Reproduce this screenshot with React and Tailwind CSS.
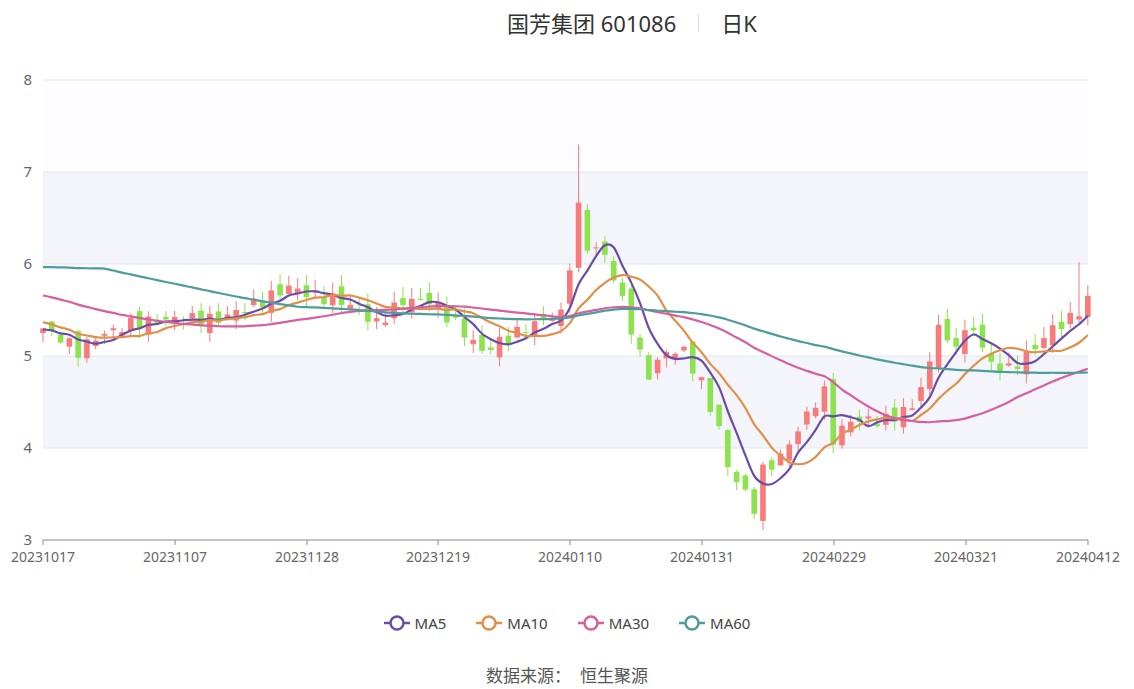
import React from "react";

const X0 = 43, DX = 8.78;
const yOf = (v) => 80 + (8 - v) * 92;
const xOf = (i) => X0 + i * DX;

const keys = [
  [0, 5.3], [2, 5.2], [4, 5.05], [6, 5.2], [10, 5.35], [15, 5.4], [20, 5.4], [25, 5.6],
  [28, 5.75], [31, 5.65], [34, 5.6], [38, 5.35], [41, 5.6], [44, 5.6], [47, 5.35], [50, 5.05],
  [53, 5.2], [57, 5.4], [59, 5.45], [60, 6.0], [61, 6.6], [62, 6.2], [64, 6.1], [66, 5.6],
  [68, 5.0], [69, 4.8], [71, 5.05], [73, 5.05], [75, 4.7], [77, 4.2], [78, 3.8], [80, 3.5],
  [81, 3.35], [82, 3.75], [84, 3.9], [86, 4.2], [88, 4.5], [89, 4.6], [90, 4.1], [92, 4.3],
  [96, 4.3], [99, 4.45], [101, 4.9], [102, 5.4], [103, 5.1], [106, 5.3], [108, 4.9],
  [110, 4.85], [112, 5.0], [115, 5.3], [117, 5.4], [119, 5.6],
];

function interp(i) {
  for (let k = 0; k < keys.length - 1; k++) {
    const [a, va] = keys[k], [b, vb] = keys[k + 1];
    if (i >= a && i <= b) return va + ((vb - va) * (i - a)) / (b - a);
  }
  return keys[keys.length - 1][1];
}

const closes = [];
for (let i = 0; i < 120; i++) closes.push(interp(i) + Math.sin(i * 2.7) * 0.07);
const prior = [];
for (let i = 0; i < 60; i++) {
  if (i < 8) prior.push(5.3);
  else if (i < 30) prior.push(6.6);
  else if (i < 40) prior.push(5.9);
  else prior.push(5.9 - ((i - 40) / 20) * 0.7);
}
const all = [...prior, ...closes];

const candles = closes.map((c, i) => {
  const o = i === 0 ? 5.25 : closes[i - 1] + Math.sin(i * 1.9) * 0.08;
  const hi = Math.max(o, c) + Math.abs(Math.sin(i * 3.1)) * 0.12;
  const lo = Math.min(o, c) - Math.abs(Math.cos(i * 2.3)) * 0.1;
  return { o, c, hi: i === 61 ? 7.3 : i === 118 ? 6.02 : hi, lo };
});

function ma(n) {
  return closes.map((_, i) => {
    const j = i + 60;
    let s = 0;
    for (let k = j - n + 1; k <= j; k++) s += all[k];
    return s / n;
  });
}

function smooth(vals) {
  const p = vals.map((v, i) => [xOf(i), yOf(v)]);
  let d = `M${p[0][0]},${p[0][1]}`;
  for (let i = 0; i < p.length - 1; i++) {
    const p0 = p[i - 1] || p[i], p1 = p[i], p2 = p[i + 1], p3 = p[i + 2] || p2;
    const c1 = [p1[0] + (p2[0] - p0[0]) / 6, p1[1] + (p2[1] - p0[1]) / 6];
    const c2 = [p2[0] - (p3[0] - p1[0]) / 6, p2[1] - (p3[1] - p1[1]) / 6];
    d += ` C${c1[0]},${c1[1]} ${c2[0]},${c2[1]} ${p2[0]},${p2[1]}`;
  }
  return d;
}

const lines = [
  { name: "MA5", n: 5, color: "#6a4ea6" },
  { name: "MA10", n: 10, color: "#e0904a" },
  { name: "MA30", n: 30, color: "#d65fa0" },
  { name: "MA60", n: 60, color: "#4e9c9c" },
];

const xLabels = ["20231017", "20231107", "20231128", "20231219", "20240110", "20240131", "20240229", "20240321", "20240412"];
const xLabelX = [43, 175, 307, 438, 570, 702, 834, 966, 1088];

export default function App() {
  const font = { fontFamily: "'Noto Sans', 'Noto Sans CJK SC', sans-serif" };
  return (
    <div className="w-[1134px] h-[689px] bg-white text-[#333]" style={font}>
      <div className="h-[46px] flex items-center justify-center pl-[130px] text-[22px]">
        <span>国芳集团 601086</span>
        <span className="w-px h-[18px] bg-[#ddd] ml-[22px] mr-[22px]" />
        <span>日K</span>
      </div>
      <svg width="1134" height="534" viewBox="0 46 1134 534">
        <rect x="43" y="80" width="1045" height="92" fill="#fdfcfe" />
        <rect x="43" y="172" width="1045" height="92" fill="#f4f5fa" />
        <rect x="43" y="356" width="1045" height="92" fill="#f4f5fa" />
        {[8, 7, 6, 5, 4].map((v) => (
          <line key={v} x1="43" x2="1088" y1={yOf(v)} y2={yOf(v)} stroke="#e0e6f1" />
        ))}
        {[8, 7, 6, 5, 4, 3].map((v) => (
          <text key={v} x="32" y={yOf(v) + 5} textAnchor="end" fontSize="15" fill="#666">{v}</text>
        ))}
        <line x1="43" x2="1088" y1="540" y2="540" stroke="#888" />
        {xLabelX.map((x, i) => (
          <g key={i}>
            <line x1={x} x2={x} y1="540" y2="545" stroke="#888" />
            <text x={x} y="562" textAnchor="middle" fontSize="14" fill="#666">{xLabels[i]}</text>
          </g>
        ))}
        {candles.map((k, i) => {
          const up = k.c >= k.o;
          const col = up ? "#f77b7b" : "#8de34e";
          const x = xOf(i);
          const top = yOf(Math.max(k.o, k.c));
          const h = Math.max(1, Math.abs(yOf(k.o) - yOf(k.c)));
          return (
            <g key={i}>
              <line x1={x} x2={x} y1={yOf(k.hi)} y2={yOf(k.lo)} stroke={col} />
              <rect x={x - 2.8} y={top} width="5.6" height={h} fill={col} />
            </g>
          );
        })}
        {lines.map((l) => (
          <path key={l.name} d={smooth(ma(l.n))} fill="none" stroke={l.color} strokeWidth="2.2" />
        ))}
      </svg>
      <div className="h-[86px] flex items-center justify-center gap-[30px] text-[15px] text-[#444]">
        {lines.map((l) => (
          <div key={l.name} className="flex items-center gap-[5px]">
            <svg width="26" height="16">
              <line x1="0" x2="26" y1="8" y2="8" stroke={l.color} strokeWidth="2.5" />
              <circle cx="13" cy="8" r="6.5" fill="white" stroke={l.color} strokeWidth="2.5" />
            </svg>
            <span>{l.name}</span>
          </div>
        ))}
      </div>
      <div className="h-[20px] leading-[20px] text-center text-[17px] text-[#555]">数据来源：&nbsp;&nbsp;恒生聚源</div>
    </div>
  );
}
